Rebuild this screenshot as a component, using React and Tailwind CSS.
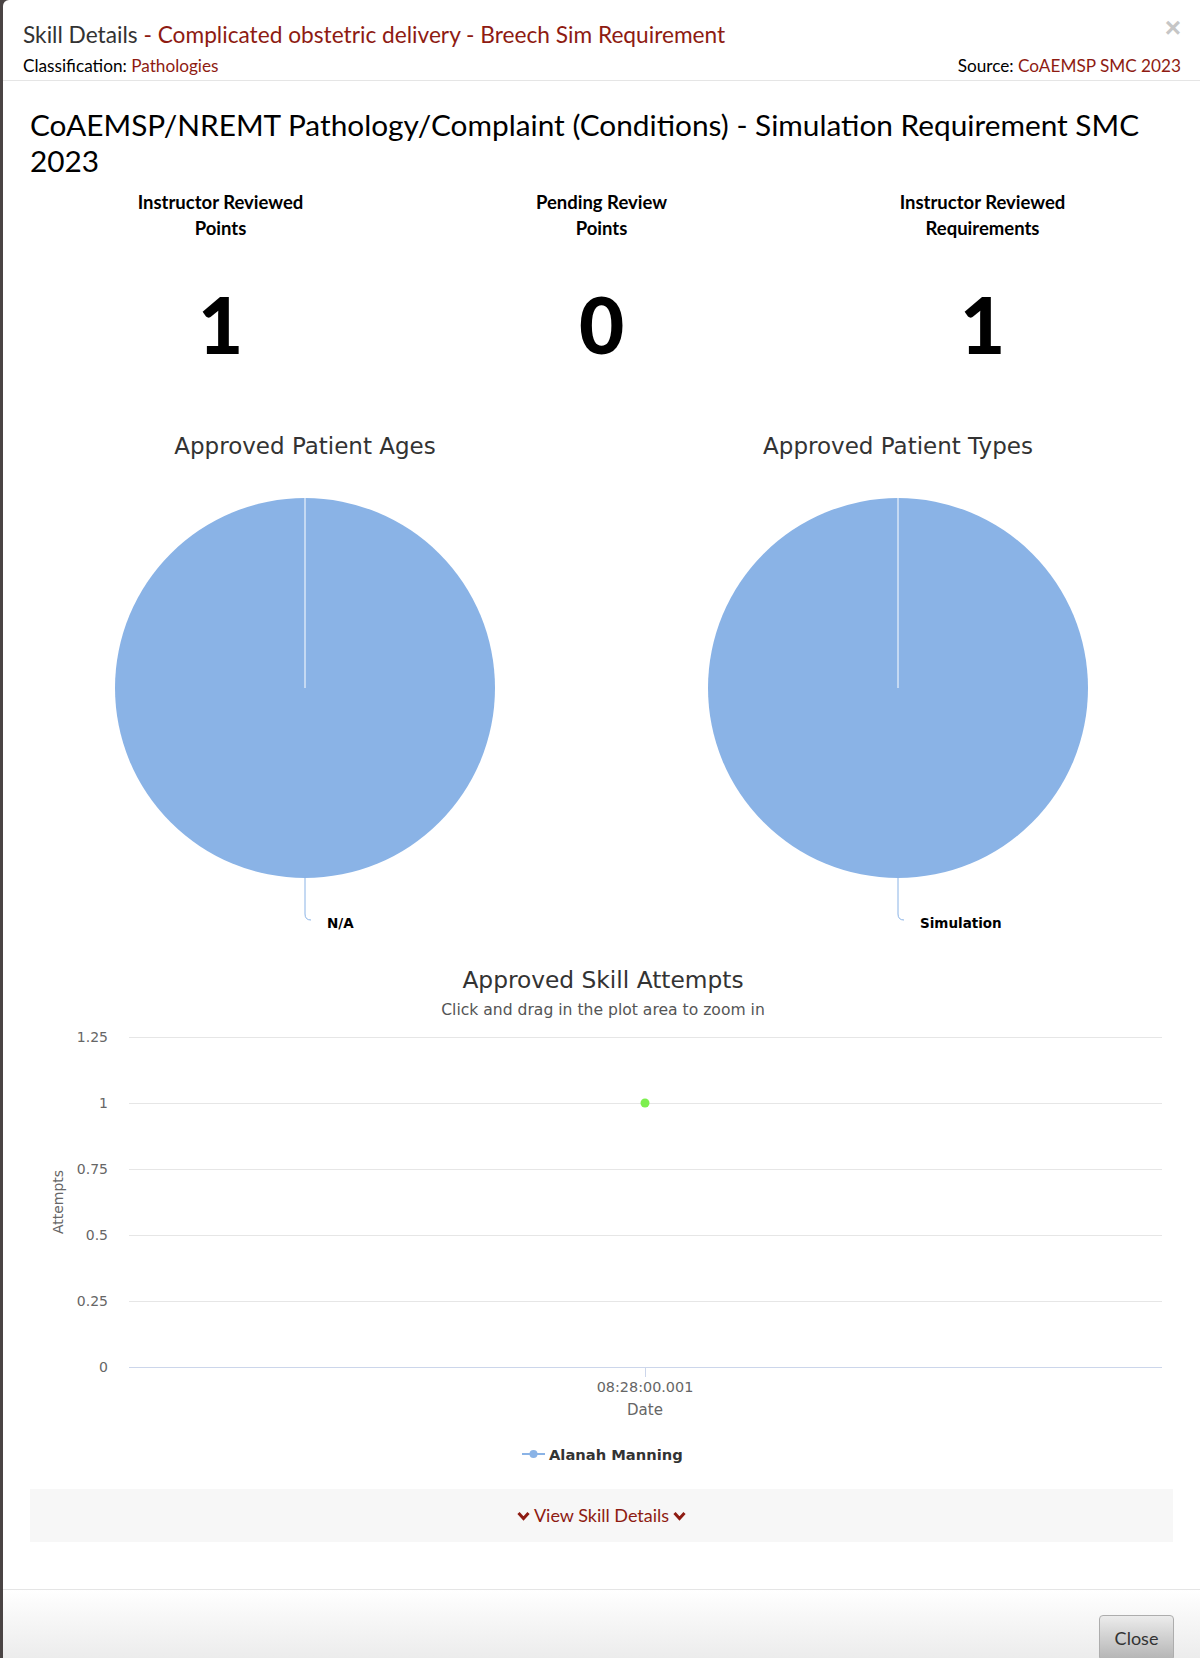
import React from 'react';

const SANS = 'font-["Lato","Noto_Sans",sans-serif]';
const CHART_FONT = 'DejaVu Sans, Verdana, sans-serif';
const PIE_BLUE = '#8ab3e6';

function Stat({ lines, value }) {
  return (
    <div className="flex flex-col items-center">
      <div className="h-[52px] text-center text-[18.5px] font-bold leading-[26px] text-black">
        {lines.map((l) => (
          <div key={l}>{l}</div>
        ))}
      </div>
      <div className="mt-[44px] text-[78px] font-black leading-[78px] text-black">{value}</div>
    </div>
  );
}

function PieChart({ title, label }) {
  const cx = 275;
  const cy = 288;
  const r = 190;
  return (
    <svg width="550" height="540" viewBox="0 0 550 540" className="mx-auto block">
      <text x={cx} y={46} textAnchor="middle" dominantBaseline="central" fontSize="23" fill="#333" fontFamily={CHART_FONT}>
        {title}
      </text>
      <circle cx={cx} cy={cy} r={r} fill={PIE_BLUE} />
      <line x1={cx} y1={cy - r} x2={cx} y2={cy} stroke="#fff" strokeWidth="1" />
      <path
        d={`M${cx} ${cy + r} L${cx} ${cy + r + 36} Q${cx} ${cy + r + 42} ${cx + 6} ${cy + r + 42}`}
        stroke={PIE_BLUE}
        strokeWidth="1"
        fill="none"
      />
      <text x={cx + 22} y={cy + r + 45} dominantBaseline="central" fontSize="13.5" fontWeight="bold" fill="#000" fontFamily={CHART_FONT}>
        {label}
      </text>
    </svg>
  );
}

function AttemptsChart() {
  const left = 99;
  const right = 1132;
  const ticks = [
    { v: '1.25', y: 87 },
    { v: '1', y: 153 },
    { v: '0.75', y: 219 },
    { v: '0.5', y: 285 },
    { v: '0.25', y: 351 },
    { v: '0', y: 417 },
  ];
  return (
    <svg width="1143" height="539" viewBox="0 0 1143 539" className="block">
      <text x="573" y="29" textAnchor="middle" dominantBaseline="central" fontSize="23.3" fill="#333" fontFamily={CHART_FONT}>
        Approved Skill Attempts
      </text>
      <text x="573" y="60" textAnchor="middle" dominantBaseline="central" fontSize="15.6" fill="#555" fontFamily={CHART_FONT}>
        Click and drag in the plot area to zoom in
      </text>
      {ticks.map((t) => (
        <g key={t.v}>
          <line x1={left} x2={right} y1={t.y + 0.5} y2={t.y + 0.5} stroke={t.v === '0' ? '#ccd6eb' : '#e6e6e6'} strokeWidth="1" />
          <text x="78" y={t.y} textAnchor="end" dominantBaseline="central" fontSize="14" fill="#666" fontFamily={CHART_FONT}>
            {t.v}
          </text>
        </g>
      ))}
      <text
        x="28"
        y="252"
        textAnchor="middle"
        dominantBaseline="central"
        fontSize="14"
        fill="#666"
        fontFamily={CHART_FONT}
        transform="rotate(-90 28 252)"
      >
        Attempts
      </text>
      <line x1="615.5" x2="615.5" y1="417" y2="427" stroke="#ccd6eb" strokeWidth="1" />
      <text x="615" y="437" textAnchor="middle" dominantBaseline="central" fontSize="14.4" fill="#666" fontFamily={CHART_FONT}>
        08:28:00.001
      </text>
      <text x="615" y="460" textAnchor="middle" dominantBaseline="central" fontSize="15" fill="#666" fontFamily={CHART_FONT}>
        Date
      </text>
      <circle cx="615" cy="153" r="4.5" fill="#7def4f" />
      <line x1="492" x2="515" y1="504" y2="504" stroke={PIE_BLUE} strokeWidth="2" />
      <circle cx="503.5" cy="504" r="4" fill={PIE_BLUE} />
      <text x="519" y="504" dominantBaseline="central" fontSize="14.7" fontWeight="bold" fill="#333" fontFamily={CHART_FONT}>
        Alanah Manning
      </text>
    </svg>
  );
}

function Chevron() {
  return (
    <svg width="13" height="10" viewBox="0 0 13 10" className="inline-block">
      <polyline points="1.5,2 6.5,7.5 11.5,2" fill="none" stroke="#8e1b12" strokeWidth="3" />
    </svg>
  );
}

export default function App() {
  return (
    <div className={`${SANS} flex h-[1658px] w-[1200px] overflow-hidden bg-[#4a4444]`}>
      <div className="w-[3px] shrink-0 bg-[#4a4444]" />
      <div className="relative flex flex-1 flex-col rounded-tl-[6px] bg-white">
        {/* header */}
        <div className="relative border-b border-[#e5e5e5] pb-[3px] pl-[20px] pr-[19px] pt-[20px]">
          <div className="text-[22.7px] leading-[30px] text-[#333]">
            Skill Details <span className="text-[#8e1b12]">- Complicated obstetric delivery - Breech Sim Requirement</span>
          </div>
          <div className="mt-[5px] flex justify-between text-[17.2px] leading-[22px] text-black">
            <div>
              Classification: <span className="text-[#8e1b12]">Pathologies</span>
            </div>
            <div>
              Source: <span className="text-[#8e1b12]">CoAEMSP SMC 2023</span>
            </div>
          </div>
          <button className="absolute right-[19px] top-[14px] font-['Liberation_Sans',sans-serif] text-[28px] font-bold leading-[28px] text-[#c6c6c6]">
            ×
          </button>
        </div>

        {/* body */}
        <div className="flex-1 px-[27px] pb-[47px] pt-[26px]">
          <h2 className="text-[29.8px] leading-[36px] text-black">
            CoAEMSP/NREMT Pathology/Complaint (Conditions) - Simulation Requirement SMC 2023
          </h2>

          <div className="mt-[10px] grid grid-cols-3">
            <Stat lines={['Instructor Reviewed', 'Points']} value="1" />
            <Stat lines={['Pending Review', 'Points']} value="0" />
            <Stat lines={['Instructor Reviewed', 'Requirements']} value="1" />
          </div>

          <div className="mt-[37px] grid grid-cols-2 gap-[42px]">
            <PieChart title="Approved Patient Ages" label="N/A" />
            <PieChart title="Approved Patient Types" label="Simulation" />
          </div>

          <div className="mt-[10px]">
            <AttemptsChart />
          </div>

          <div className="flex h-[53px] items-center justify-center gap-[4px] bg-[#f7f7f7] text-[18px] text-[#8e1b12]">
            <Chevron />
            <span>View Skill Details</span>
            <Chevron />
          </div>
        </div>

        {/* footer */}
        <div className="h-[69px] border-t border-[#e5e5e5] bg-gradient-to-b from-white to-[#ececec] pr-[26px] pt-[25px]">
          <div className="flex justify-end">
            <button className="h-[46px] w-[75px] rounded-[4px] border border-[#adadad] bg-gradient-to-b from-[#ececec] to-[#b4b4b4] text-[18px] text-[#333]">
              Close
            </button>
          </div>
        </div>
      </div>
    </div>
  );
}
